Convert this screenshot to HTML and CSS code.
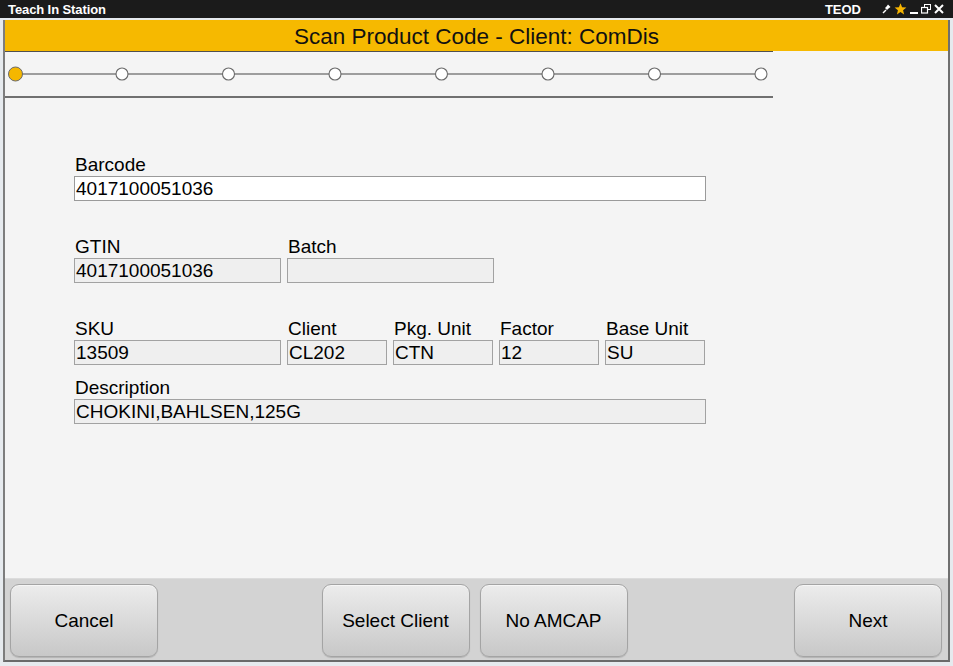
FILE: index.html
```html
<!DOCTYPE html>
<html>
<head>
<meta charset="utf-8">
<link rel="stylesheet" href="styles.css">
</head>
<body>
<div class="titlebar">
  <span class="app-name">Teach In Station</span>
  <span class="user">TEOD</span>
  <span class="win-icons">
    <svg class="ico" width="9" height="10" viewBox="0 0 9 10"><path d="M1 9 L4 6" stroke="#fff" stroke-width="1.4"/><path d="M3 4 L5 6 L6.5 4.5 L8.5 3 L6 0.5 L4.5 2.5 Z" fill="#fff"/></svg>
    <svg class="ico" width="13" height="12" viewBox="0 0 13 12"><path d="M6.5 0.3 L8.1 4.2 L12.4 4.5 L9.1 7.2 L10.1 11.4 L6.5 9.1 L2.9 11.4 L3.9 7.2 L0.6 4.5 L4.9 4.2 Z" fill="#f6b400"/></svg>
    <svg class="ico" width="8" height="10" viewBox="0 0 8 10"><rect x="0" y="8" width="8" height="2" fill="#fff"/></svg>
    <svg class="ico" width="10" height="10" viewBox="0 0 10 10"><rect x="3.5" y="0.5" width="6" height="5" fill="none" stroke="#fff" stroke-width="1"/><rect x="0.5" y="3.5" width="6" height="5.5" fill="#1b1b1b" stroke="#fff" stroke-width="1.2"/></svg>
    <svg class="ico" width="10" height="10" viewBox="0 0 10 10"><path d="M1 1 L9 9 M9 1 L1 9" stroke="#fff" stroke-width="2"/></svg>
  </span>
</div>
<div class="window">
  <div class="header">Scan Product Code - Client: ComDis</div>
  <div class="stepper">
    <svg width="768" height="44" viewBox="0 0 768 44">
      <line x1="11" y1="22" x2="756" y2="22" stroke="#808080" stroke-width="1.3"/>
      <circle cx="10.5" cy="22" r="7" fill="#f5b700" stroke="#6a6a6a" stroke-width="1"/>
      <circle cx="117" cy="22" r="6" fill="#fff" stroke="#6a6a6a" stroke-width="1.1"/>
      <circle cx="223.5" cy="22" r="6" fill="#fff" stroke="#6a6a6a" stroke-width="1.1"/>
      <circle cx="330" cy="22" r="6" fill="#fff" stroke="#6a6a6a" stroke-width="1.1"/>
      <circle cx="436.5" cy="22" r="6" fill="#fff" stroke="#6a6a6a" stroke-width="1.1"/>
      <circle cx="543" cy="22" r="6" fill="#fff" stroke="#6a6a6a" stroke-width="1.1"/>
      <circle cx="649.5" cy="22" r="6" fill="#fff" stroke="#6a6a6a" stroke-width="1.1"/>
      <circle cx="756" cy="22" r="6" fill="#fff" stroke="#6a6a6a" stroke-width="1.1"/>
    </svg>
  </div>
  <div class="main">
    <div class="form">
      <div class="field f-wide">
        <label class="lbl">Barcode</label>
        <div class="box box-edit">4017100051036</div>
      </div>
      <div class="row row-gap-big">
        <div class="field f-half">
          <label class="lbl">GTIN</label>
          <div class="box">4017100051036</div>
        </div>
        <div class="field f-half">
          <label class="lbl">Batch</label>
          <div class="box"></div>
        </div>
      </div>
      <div class="row row-gap-big">
        <div class="field f-half">
          <label class="lbl">SKU</label>
          <div class="box">13509</div>
        </div>
        <div class="field f-small">
          <label class="lbl">Client</label>
          <div class="box">CL202</div>
        </div>
        <div class="field f-small">
          <label class="lbl">Pkg. Unit</label>
          <div class="box">CTN</div>
        </div>
        <div class="field f-small">
          <label class="lbl">Factor</label>
          <div class="box">12</div>
        </div>
        <div class="field f-small">
          <label class="lbl">Base Unit</label>
          <div class="box">SU</div>
        </div>
      </div>
      <div class="field f-wide row-gap-small">
        <label class="lbl">Description</label>
        <div class="box">CHOKINI,BAHLSEN,125G</div>
      </div>
    </div>
  </div>
  <div class="footer">
    <button class="btn">Cancel</button>
    <div class="btn-group">
      <button class="btn">Select Client</button>
      <button class="btn">No AMCAP</button>
    </div>
    <button class="btn">Next</button>
  </div>
</div>
</body>
</html>
```
FILE: styles.css
```css
* { box-sizing: border-box; }
html, body {
  margin: 0;
  padding: 0;
  width: 953px;
  height: 666px;
  overflow: hidden;
  background: #e6eaee;
  font-family: "Liberation Sans", Arial, sans-serif;
}
.titlebar {
  height: 18px;
  background: #1b1b1b;
  color: #fff;
  display: flex;
  align-items: center;
  padding-left: 8px;
  font-weight: bold;
  font-size: 13px;
}
.app-name { flex: 1; letter-spacing: -0.1px; }
.user { margin-right: 21px; }
.win-icons {
  display: flex;
  align-items: center;
  gap: 3px;
  margin-right: 9px;
}
.ico { display: block; }
.window {
  margin: 2px 3px 4px 3px;
  height: 642px;
  border-left: 2px solid #7d7d7d;
  border-right: 2px solid #6f6f6f;
  border-bottom: 2px solid #6a6a6a;
  background: #f4f4f4;
  display: flex;
  flex-direction: column;
}
.header {
  height: 31px;
  background: #f6b900;
  color: #111;
  text-align: center;
  font-size: 22.5px;
  line-height: 29px;
  padding-top: 2px;
  flex: none;
}
.stepper {
  width: 768px;
  height: 47px;
  border-top: 1px solid #505050;
  border-bottom: 2px solid #707070;
  flex: none;
}
.stepper svg { display: block; }
.main {
  flex: 1;
  padding: 56px 0 0 69px;
}
.form {
  width: 632px;
  display: flex;
  flex-direction: column;
}
.row {
  display: flex;
  gap: 6px;
}
.row-gap-big { margin-top: 35px; }
.row-gap-small { margin-top: 12px; }
.field { display: flex; flex-direction: column; }
.f-wide { width: 632px; }
.f-half { width: 207px; }
.f-small { width: 100px; }
.lbl {
  font-size: 19px;
  line-height: 22px;
  color: #000;
  padding-left: 1px;
  white-space: nowrap;
}
.box {
  height: 25px;
  border: 1px solid #a2a2a2;
  background: #efefef;
  font-size: 19px;
  line-height: 23px;
  padding: 0 1px;
  color: #000;
  white-space: nowrap;
  overflow: hidden;
}
.box-edit {
  background: #fff;
  border-color: #9a9a9a;
}
.footer {
  height: 82px;
  flex: none;
  background: #d3d3d3;
  border-top: 1px solid #dcdcdc;
  padding: 5px 6px 3px 5px;
  display: flex;
  justify-content: space-between;
  align-items: flex-start;
}
.btn-group {
  display: flex;
  gap: 10px;
  margin-right: 3px;
}
.btn {
  width: 148px;
  height: 73px;
  border: 1px solid #a4a4a4;
  border-radius: 9px;
  background: linear-gradient(#ececec, #c8c8c8);
  box-shadow: inset 0 1px 0 #f6f6f6, 0 1px 1px rgba(0,0,0,0.15);
  font-family: "Liberation Sans", Arial, sans-serif;
  font-size: 19px;
  color: #000;
  padding: 0;
  margin: 0;
}
```
